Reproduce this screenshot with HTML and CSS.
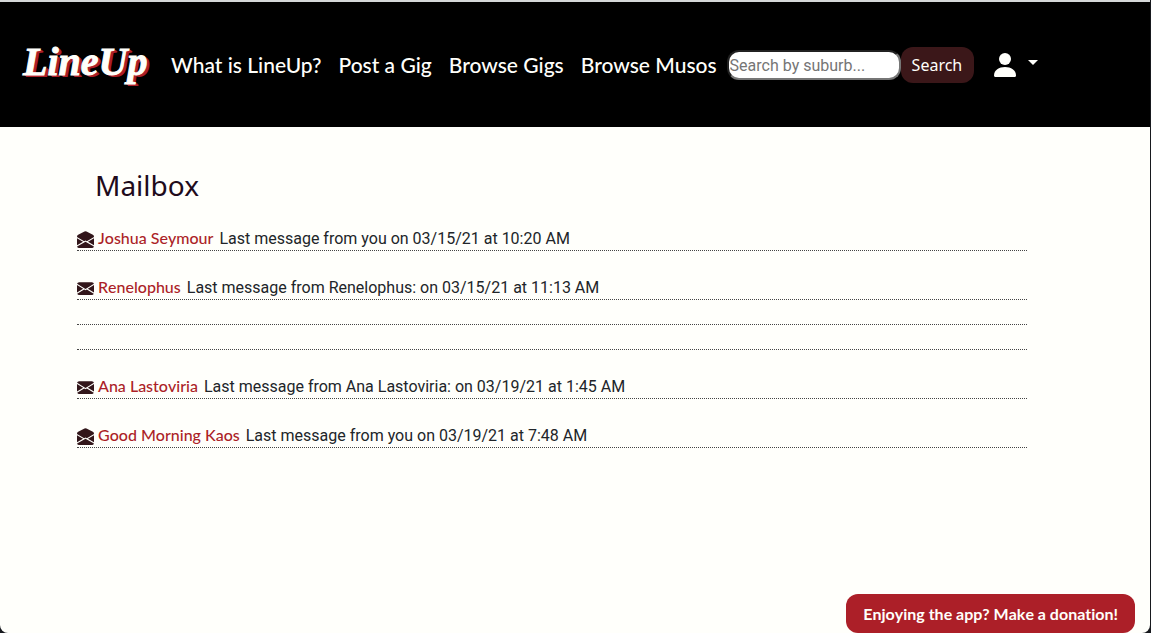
FILE: index.html
```html
<!DOCTYPE html>
<html lang="en">
<head>
<meta charset="utf-8">
<meta name="viewport" content="width=device-width, initial-scale=1">
<title>LineUp - Mailbox</title>
<link rel="stylesheet" href="styles.css">
</head>
<body>
<svg class="sprite" aria-hidden="true">
  <symbol id="open" viewBox="0 0 16 16">
    <path d="M8.94.44a2 2 0 0 0-1.88 0l-6 3.2A2 2 0 0 0 0 5.400v.313l6.709 3.932L8 8.928l1.291.717L16 5.715V5.400a2 2 0 0 0-1.060-1.760zM16 6.873l-5.693 3.337L16 13.372zm-.059 7.611L8 10.072.059 14.484A2 2 0 0 0 2 16h12a2 2 0 0 0 1.941-1.516M0 13.373l5.693-3.163L0 6.873z"/>
  </symbol>
  <symbol id="closed" viewBox="0 0 16 16">
    <path d="M.05 3.555A2 2 0 0 1 2 2h12a2 2 0 0 1 1.950 1.555L8 8.414zM0 4.697v7.104l5.803-3.558zM6.761 8.830l-6.570 4.027A2 2 0 0 0 2 14h12a2 2 0 0 0 1.808-1.144l-6.570-4.027L8 9.586zm3.436-.586L16 11.801V4.697z"/>
  </symbol>
</svg>
<div class="page">
  <header class="navbar">
    <a class="logo" href="#">LineUp</a>
    <nav class="links">
      <a href="#">What is LineUp?</a>
      <a href="#">Post a Gig</a>
      <a href="#">Browse Gigs</a>
      <a href="#">Browse Musos</a>
    </nav>
    <form class="search">
      <input type="text" placeholder="Search by suburb..." aria-label="Search by suburb">
      <button type="submit">Search</button>
    </form>
    <button class="account" type="button" aria-label="Account menu">
      <svg class="person" viewBox="0 0 24 24" aria-hidden="true"><circle cx="12" cy="6" r="6"/><path d="M1 22.500C1 17 6 14 12 14s11 3 11 8.500c0 .8-.5 1.500-1.500 1.500h-19C1.500 24 1 23.300 1 22.500z"/></svg>
      <span class="caret"></span>
    </button>
  </header>
  <main class="mailbox">
    <h1>Mailbox</h1>
    <ul class="threads">
      <li><svg class="mail" aria-hidden="true"><use href="#open"/></svg><a href="#">Joshua Seymour</a><span>Last message from you on 03/15/21 at 10:20 AM</span></li>
      <li><svg class="mail" aria-hidden="true"><use href="#closed"/></svg><a href="#">Renelophus</a><span>Last message from Renelophus: on 03/15/21 at 11:13 AM</span></li>
      <li></li>
      <li></li>
      <li><svg class="mail" aria-hidden="true"><use href="#closed"/></svg><a href="#">Ana Lastoviria</a><span>Last message from Ana Lastoviria: on 03/19/21 at 1:45 AM</span></li>
      <li><svg class="mail" aria-hidden="true"><use href="#open"/></svg><a href="#">Good Morning Kaos</a><span>Last message from you on 03/19/21 at 7:48 AM</span></li>
    </ul>
  </main>
</div>
<a class="donate" href="#">Enjoying the app? Make a donation!</a>
</body>
</html>
```
FILE: styles.css
```css
* { box-sizing: border-box; }
body {
  margin: 0;
  background: #17191e;
  color: #212529;
  font: 16px/24px Roboto, "Liberation Sans", sans-serif;
}
a { text-decoration: none; }
.sprite { display: none; }
.page {
  min-height: 100vh;
  margin-right: 1px;
  border-top: 2px solid #d5d7d8;
  border-radius: 0 0 8px 8px;
  background: #fffffb;
}
.navbar {
  display: flex;
  align-items: center;
  min-height: 125px;
  padding: 0 23px;
  background: #000;
}
.logo {
  width: 148px;
  padding-bottom: 6px;
  color: #fffffb;
  font: italic bold 40px/48px "Liberation Serif", serif;
  -webkit-text-stroke: 1px #fffffb;
  text-shadow: 2px 1px #ac1f28, 3px 2px #ac1f28;
}
.links { display: flex; gap: 17px; margin-right: 10px; }
.links a { color: #fffffb; font: 500 21px/32px Lato, sans-serif; white-space: nowrap; }
.search { display: flex; align-items: center; }
.search input {
  width: 174px;
  height: 30px;
  padding: 2px 1px 0;
  border: 2px inset #767676;
  border-radius: 12px;
  background: #fff;
  font: 16px/24px Roboto, sans-serif;
}
.search input::placeholder { color: #757575; }
.search button {
  height: 36px;
  padding: 0 12px 0 11px;
  border: 0;
  border-radius: 12px;
  background: #3b1719;
  color: #fffffb;
  font: 16px/24px "Noto Sans", sans-serif;
}
.account {
  display: flex;
  align-items: center;
  gap: 11px;
  margin-left: 19px;
  padding: 0;
  border: 0;
  background: none;
}
.person { width: 24px; height: 24px; fill: #fffffb; }
.caret {
  margin-bottom: 4px;
  border: 5px solid transparent;
  border-top-color: #fffffb;
  border-bottom: 0;
}
.mailbox { padding: 41px 123px 40px 77px; }
.mailbox h1 {
  margin: 0;
  padding-left: 18px;
  color: #210b1b;
  font: 28px/34px "Noto Sans", sans-serif;
}
.threads { margin: 0; padding: 0; list-style: none; }
.threads li {
  display: flex;
  align-items: baseline;
  gap: 4px;
  padding-top: 24px;
  border-bottom: 1px dotted #444;
}
.threads a {
  color: #ac1f28;
  font: 500 16px/24px Lato, sans-serif;
  font-variant-ligatures: none;
  font-kerning: none;
}
.threads span { margin-left: 2px; line-height: 22px; }
.mail { align-self: center; width: 17px; height: 17px; margin-top: 3px; fill: #32161a; }
.donate {
  position: fixed;
  right: 16px;
  bottom: 0;
  padding: 8px 17px 7px;
  border-radius: 12px;
  background: #ac1f28;
  color: #fffffb;
  font: bold 16px/24px Lato, sans-serif;
  font-variant-ligatures: none;
  font-kerning: none;
}
```
